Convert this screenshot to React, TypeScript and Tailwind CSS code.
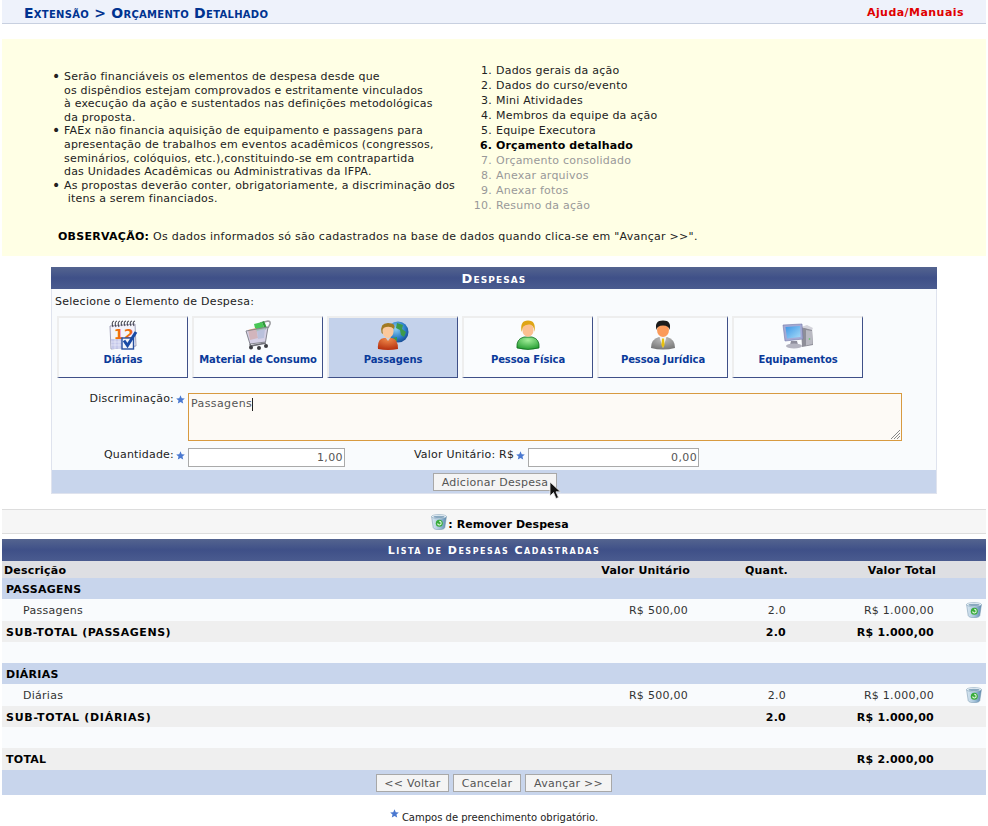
import type { ReactNode } from "react";

const font = "font-['DejaVu_Sans',_Verdana,_sans-serif]";

function Star() {
  return (
    <svg width="9" height="9" viewBox="0 0 10 10" className="shrink-0">
      <path d="M5 0.3 6.4 3.5 9.8 3.8 7.2 6 8 9.5 5 7.7 2 9.5 2.8 6 0.2 3.8 3.6 3.5Z" fill="#4a78d0" />
    </svg>
  );
}

function Trash() {
  return (
    <svg width="16" height="16" viewBox="0 0 16 16">
      <defs>
        <linearGradient id="bin" x1="0" x2="1" y1="0" y2="0">
          <stop offset="0" stopColor="#dce9f3" />
          <stop offset="0.5" stopColor="#a9c6dc" />
          <stop offset="1" stopColor="#5e8cb2" />
        </linearGradient>
      </defs>
      <path d="M0.6 2.6 2.2 13.6Q3 15.7 8 15.7T13.8 13.6L15.4 2.6Z" fill="url(#bin)" stroke="#6c8fa9" strokeWidth="0.5" />
      <ellipse cx="8" cy="2.6" rx="7.5" ry="2.1" fill="#eef5fa" stroke="#7c9cb4" strokeWidth="0.5" />
      <ellipse cx="8" cy="2.9" rx="5.6" ry="1.1" fill="#8aa9c0" />
      <circle cx="8.3" cy="9.2" r="3.5" fill="#38ac3a" />
      <path d="M6.6 9.4A1.8 1.8 0 1 0 8.3 7.4" fill="none" stroke="#e4f6df" strokeWidth="1.1" />
    </svg>
  );
}

function CalendarIcon() {
  return (
    <svg width="30" height="30" viewBox="0 0 30 30">
      <path d="M2 6 27 4 28 26 3 29Z" fill="#f4f3fb" stroke="#8c8caa" strokeWidth="0.8" />
      <path d="M3 19H15V28.5L3.6 29Z" fill="#c5c8ea" />
      <path d="M3 22H15M3 25H15M7 19V29M11 19V29" stroke="#f2f2fb" strokeWidth="0.6" />
      <path d="M5 7Q3 2 6 1M8 7Q6 2 9 1M11 7Q9 2 12 1M14 6Q12 2 15 1M17 6Q15 2 18 1M20 6Q18 2 21 1M23 6Q21 2 24 1M26 6Q24 2 27 1" fill="none" stroke="#4a4a55" strokeWidth="1.1" />
      <text x="6" y="19" fontSize="14" fontWeight="700" fill="#ef6d12" fontFamily="DejaVu Sans">12</text>
      <rect x="14" y="18" width="11.5" height="11" fill="#f4f6fc" stroke="#274f9f" strokeWidth="1.4" />
      <path d="M16 20.5 19.5 25.5 28 12" fill="none" stroke="#1a4aa5" strokeWidth="3" />
    </svg>
  );
}

function CartIcon() {
  return (
    <svg width="26" height="30" viewBox="0 0 26 30">
      <path d="M15 3 23 1Q25.5 1 25 4L23 8" fill="none" stroke="#9a9a9e" strokeWidth="1.6" />
      <path d="M9 4 17 2 20 10 11 12Z" fill="#48c656" />
      <path d="M17 2 20 10 22 8 19 1Z" fill="#2f9a3c" />
      <path d="M3 10 11 8 13 18 5 20Z" fill="#ef9a68" />
      <path d="M12 11 20 9 19 18 13 19Z" fill="#9cc4dc" />
      <path d="M1 11 23 7 20.5 22 5 24Z" fill="#c6bfdc" fillOpacity="0.72" stroke="#85858f" strokeWidth="1" />
      <path d="M5 24 5.5 26 21 23" fill="none" stroke="#707078" strokeWidth="1.6" />
      <circle cx="6" cy="27.5" r="2" fill="#3d3d42" />
      <circle cx="14" cy="28" r="2" fill="#3d3d42" />
      <circle cx="21" cy="26" r="2" fill="#3d3d42" />
    </svg>
  );
}

function TravelIcon() {
  return (
    <svg width="32" height="30" viewBox="0 0 32 30">
      <defs>
        <radialGradient id="globe" cx="0.4" cy="0.35" r="0.75">
          <stop offset="0" stopColor="#8fd0f4" />
          <stop offset="0.6" stopColor="#2b7cc6" />
          <stop offset="1" stopColor="#123f86" />
        </radialGradient>
        <radialGradient id="redShirt" cx="0.5" cy="0.1" r="0.9">
          <stop offset="0" stopColor="#f08a4a" />
          <stop offset="1" stopColor="#b6300f" />
        </radialGradient>
      </defs>
      <circle cx="21" cy="12" r="10.5" fill="url(#globe)" />
      <path d="M20 3 26 5 25 9 29 12 27 17 24 15 23 10 19 8Z" fill="#3d9a4a" />
      <path d="M16 18 20 17 20 21 17 21Z" fill="#3d9a4a" />
      <path d="M1 29Q0 19 7 18H15Q21 19 21 29Q11 31 1 29Z" fill="url(#redShirt)" />
      <path d="M8 17H14L11 21Z" fill="#cfd3dc" />
      <ellipse cx="11" cy="11" rx="5.6" ry="7" fill="#fbc89c" />
      <path d="M4.6 13Q2.5 3 11 3T17 9Q14 6 9 7T6 14Z" fill="#a27a22" />
    </svg>
  );
}

function PersonIcon() {
  return (
    <svg width="24" height="30" viewBox="0 0 24 30">
      <defs>
        <radialGradient id="greenShirt" cx="0.5" cy="0.25" r="0.8">
          <stop offset="0" stopColor="#a3ee9a" />
          <stop offset="1" stopColor="#1f9a2c" />
        </radialGradient>
      </defs>
      <path d="M1 28Q0 19 8 17H16Q24 19 23 28Q12 31 1 28Z" fill="url(#greenShirt)" stroke="#126d20" strokeWidth="0.8" />
      <ellipse cx="12" cy="10" rx="5.6" ry="6.8" fill="#fcc091" />
      <path d="M5.6 12Q3.5 0.5 12 0.5T18.4 12Q18 5 14 4.5Q9 4 7 7Z" fill="#dfa516" />
    </svg>
  );
}

function SuitIcon() {
  return (
    <svg width="24" height="30" viewBox="0 0 24 30">
      <defs>
        <radialGradient id="suit" cx="0.5" cy="0.2" r="0.9">
          <stop offset="0" stopColor="#bdbdbd" />
          <stop offset="1" stopColor="#6f6f6f" />
        </radialGradient>
      </defs>
      <path d="M0 28Q0 19 8 17H16Q24 19 24 28Q12 31 0 28Z" fill="url(#suit)" />
      <path d="M8.5 17H15.5L12 28Z" fill="#f4f4f4" />
      <path d="M11 18.5H13L13.6 25 12 28 10.4 25Z" fill="#e8c210" />
      <ellipse cx="12" cy="10" rx="6" ry="7" fill="#fb9a5a" />
      <path d="M5.5 10Q3 0.5 12 0.5T18.5 10Q18 5.5 12 5.5T5.5 10Z" fill="#1b1b1b" />
    </svg>
  );
}

function ComputerIcon() {
  return (
    <svg width="32" height="30" viewBox="0 0 32 30">
      <defs>
        <linearGradient id="screen" x1="0" x2="1" y1="0" y2="1">
          <stop offset="0" stopColor="#3b96e6" />
          <stop offset="1" stopColor="#a8dcf8" />
        </linearGradient>
      </defs>
      <path d="M19 7 30 9 31 25 20 27Z" fill="#8e8e98" />
      <path d="M19 7 25 5 31 8 30 10Z" fill="#d2d2da" />
      <path d="M24 10 30 11 30.5 24 24 25.5Z" fill="#b9b9c2" />
      <circle cx="27.5" cy="19" r="0.8" fill="#55c060" />
      <path d="M1 5 20 4 21 19 3 21Z" fill="#a4a9d4" stroke="#7378a6" strokeWidth="0.6" />
      <path d="M3.5 7 18 6 18.6 17 5 18.6Z" fill="url(#screen)" />
      <path d="M9 21H15L16 25H8Z" fill="#8e8e9c" />
      <ellipse cx="12" cy="26" rx="8" ry="2.4" fill="#b4b4c0" />
    </svg>
  );
}

const elementos: { label: string; icon: ReactNode; active?: boolean }[] = [
  { label: "Diárias", icon: <CalendarIcon /> },
  { label: "Material de Consumo", icon: <CartIcon /> },
  { label: "Passagens", icon: <TravelIcon />, active: true },
  { label: "Pessoa Física", icon: <PersonIcon /> },
  { label: "Pessoa Jurídica", icon: <SuitIcon /> },
  { label: "Equipamentos", icon: <ComputerIcon /> },
];

const passos = [
  "Dados gerais da ação",
  "Dados do curso/evento",
  "Mini Atividades",
  "Membros da equipe da ação",
  "Equipe Executora",
  "Orçamento detalhado",
  "Orçamento consolidado",
  "Anexar arquivos",
  "Anexar fotos",
  "Resumo da ação",
];

function Bullet({ children }: { children: ReactNode }) {
  return (
    <li className="flex">
      <span className="w-[12px] text-[14px] leading-[13px] shrink-0">•</span>
      <span>{children}</span>
    </li>
  );
}

function Row({ bg, label, unit, qty, total, bold, icon, labelClass = "", tall }: {
  bg: string;
  label?: string;
  unit?: string;
  qty?: string;
  total?: string;
  bold?: boolean;
  icon?: boolean;
  labelClass?: string;
  tall?: boolean;
}) {
  const pad = bold && !tall ? "pt-[4px]" : "pt-[2px]";
  return (
    <div className={`flex items-center ${tall ? "h-[22px]" : "h-[21px]"} ${bg} ${bold ? "font-bold text-black" : "text-[#333]"} tracking-[0.27px]`}>
      <span className={`flex-1 ${pad} ${bold ? "pl-1" : "pl-[21px]"} ${labelClass}`}>{label}</span>
      <span className={`w-[150px] ${pad} text-right`}>{unit}</span>
      <span className={`w-[98px] ${pad} text-right`}>{qty}</span>
      <span className={`w-[148px] ${pad} text-right`}>{total}</span>
      <span className="w-[52px] flex justify-end pr-[4px]">{icon && <Trash />}</span>
    </div>
  );
}

function Btn({ children, className = "" }: { children: ReactNode; className?: string }) {
  return (
    <button className={`h-[18px] pt-[1px] border border-[#a8a8a8] bg-[#f4f4f4] text-[#555] text-[11px] tracking-[0.26px] leading-none ${className}`}>
      {children}
    </button>
  );
}

export default function App() {
  return (
    <div className={`${font} w-[988px] h-[826px] bg-white px-[2px] text-[11px] tracking-[0.2px] text-[#222] overflow-hidden`}>
      <div className="flex items-center justify-between h-[24px] pt-[3px] bg-[#eef2fb] border-b border-[#c8d0e0] pl-[22px] pr-[22px]">
        <h2 className="text-[#003390] font-bold text-[14px] [font-variant:small-caps] tracking-[0.28px]">
          Extensão &gt; Orçamento Detalhado
        </h2>
        <span className="text-[#e00000] font-bold text-[11px] tracking-[0.45px]">Ajuda/Manuais</span>
      </div>

      <div className="mt-[15px] h-[217px] bg-[#ffffe5] pl-[50px] pr-4 pt-[24px]">
        <div className="flex h-[148px] leading-[13.6px]">
          <ul className="w-[415px] pt-[7px]">
            <Bullet>
              Serão financiáveis os elementos de despesa desde que
              <br />
              os dispêndios estejam comprovados e estritamente vinculados
              <br />
              à execução da ação e sustentados nas definições metodológicas
              <br />
              da proposta.
            </Bullet>
            <Bullet>
              FAEx não financia aquisição de equipamento e passagens para
              <br />
              apresentação de trabalhos em eventos acadêmicos (congressos,
              <br />
              seminários, colóquios, etc.),constituindo-se em contrapartida
              <br />
              das Unidades Acadêmicas ou Administrativas da IFPA.
            </Bullet>
            <Bullet>
              As propostas deverão conter, obrigatoriamente, a discriminação dos
              <br />
              &nbsp;itens a serem financiados.
            </Bullet>
          </ul>
          <ol className="ml-[5px] leading-[15px] tracking-[0.22px]">
            {passos.map((p, i) => (
              <li key={p} className={`flex ${i === 5 ? "font-bold text-black tracking-[0.12px]" : i > 5 ? "text-[#999]" : ""}`}>
                <span className="w-[20px] text-right mr-[4px]">{i + 1}.</span>
                {p}
              </li>
            ))}
          </ol>
        </div>
        <p className="mt-[18px] ml-[6px] tracking-[0.27px]">
          <b className="text-black">OBSERVAÇÃO:</b> Os dados informados só são cadastrados na base de dados quando clica-se em "Avançar &gt;&gt;".
        </p>
      </div>

      <div className="mt-[11px] ml-[49px] w-[886px] bg-[#f9fbfd] border-x border-b border-[#dfe3ee]">
        <div className="h-[22px] pt-[1px] -mx-px flex items-center justify-center bg-gradient-to-b from-[#54648f] via-[#3f5088] to-[#4a5b8f] text-white font-bold text-[13px] [font-variant:small-caps] tracking-[1.1px]">
          Despesas
        </div>
        <p className="pl-[3px] pt-[6px] leading-[14px] h-[27px] tracking-[0.26px]">Selecione o Elemento de Despesa:</p>
        <div className="flex gap-[4px] pl-[5px]">
          {elementos.map((e) => (
            <div
              key={e.label}
              className={`w-[131px] h-[62px] flex flex-col items-center pt-[2px] border-t-2 border-l-2 border-r border-b border-t-[#eeeeee] border-l-[#eeeeee] border-r-[#3f5088] border-b-[#3f5088] ${e.active ? "bg-[#c4d2eb]" : "bg-[#fafcfe]"}`}
            >
              <div className="h-[33px] flex items-start">{e.icon}</div>
              <span className="text-[#0a3a9a] font-bold text-[10px] tracking-[-0.1px] whitespace-nowrap leading-[14px]">{e.label}</span>
            </div>
          ))}
        </div>
        <div className="flex mt-[15px] h-[48px]">
          <label className="w-[133px] flex justify-end gap-[2px] leading-[12px]">
            Discriminação:
            <span className="pt-[2px]"><Star /></span>
          </label>
          <div className="ml-[3px] relative w-[714px] h-[48px] border border-[#d89a40] bg-[#fdfaf6] pl-[2px] pt-[3px] leading-[14px] text-[#555] tracking-[0.4px]">
            Passagens<span className="inline-block w-px h-[13px] bg-[#222] align-middle" />
            <svg width="11" height="11" viewBox="0 0 11 11" className="absolute right-0 bottom-0">
              <path d="M10 1 1 10M10 4 4 10M10 7 7 10" stroke="#888" strokeWidth="1" />
            </svg>
          </div>
        </div>
        <div className="flex items-center mt-[6px] h-[20px]">
          <label className="w-[133px] flex justify-end items-center gap-[2px] -mt-[3px]">
            Quantidade:
            <Star />
          </label>
          <div className="ml-[3px] w-[157px] h-[19px] border border-[#aaa] bg-white text-right pr-[1px] leading-[17px] text-[#555] tracking-[0.4px]">1,00</div>
          <label className="ml-[69px] flex items-center gap-[2px] -mt-[3px]">
            Valor Unitário: R$
            <Star />
          </label>
          <div className="ml-[3px] w-[171px] h-[19px] border border-[#aaa] bg-white text-right pr-[1px] leading-[17px] text-[#555] tracking-[0.4px]">0,00</div>
        </div>
        <div className="relative mt-[3px] h-[23px] bg-[#c8d5ec] flex justify-center items-center">
          <Btn className="w-[124px] ml-[2px] mt-[1px]">Adicionar Despesa</Btn>
          <svg width="12" height="19" viewBox="0 0 12 19" className="absolute left-[497px] top-[11px]">
            <path d="M1 1V15L4.5 11.5 7 17.5 9.5 16.5 7 10.8H11.5Z" fill="#111" stroke="#eee" strokeWidth="0.8" />
          </svg>
        </div>
      </div>

      <div className="mt-[15px] h-[25px] bg-[#f6f6f6] border-y border-[#dddddd] flex items-center justify-center gap-[1px] pl-[12px] font-bold text-black tracking-[0.05px]">
        <Trash />
        <span className="mt-[7px]">: Remover Despesa</span>
      </div>

      <div className="mt-[5px] h-[22px] pt-[2px] flex items-center justify-center bg-gradient-to-b from-[#54648f] via-[#3f5088] to-[#4a5b8f] text-white font-bold text-[11px] [font-variant:small-caps] tracking-[1.5px]">
        Lista de Despesas Cadastradas
      </div>
      <div className="flex items-center h-[17px] pt-[2px] bg-[#dedfe3] font-bold text-black">
        <span className="flex-1 pl-[2px] pt-[1px]">Descrição</span>
        <span className="w-[150px] pt-[1px] text-right">Valor Unitário</span>
        <span className="w-[98px] pt-[1px] text-right">Quant.</span>
        <span className="w-[148px] pt-[1px] text-right">Valor Total</span>
        <span className="w-[50px]" />
      </div>
      <Row bg="bg-[#c8d5ec]" label="PASSAGENS" bold />
      <Row bg="bg-[#f9fbfd]" label="Passagens" unit="R$ 500,00" qty="2.0" total="R$ 1.000,00" icon tall />
      <Row bg="bg-[#efefef]" label="SUB-TOTAL (PASSAGENS)" qty="2.0" total="R$ 1.000,00" bold labelClass="tracking-[0.52px]" />
      <Row bg="bg-[#f9fbfd]" />
      <Row bg="bg-[#c8d5ec]" label="DIÁRIAS" bold />
      <Row bg="bg-[#f9fbfd]" label="Diárias" unit="R$ 500,00" qty="2.0" total="R$ 1.000,00" icon tall />
      <Row bg="bg-[#efefef]" label="SUB-TOTAL (DIÁRIAS)" qty="2.0" total="R$ 1.000,00" bold labelClass="tracking-[0.72px]" />
      <Row bg="bg-[#f9fbfd]" />
      <Row bg="bg-[#efefef]" label="TOTAL" total="R$ 2.000,00" bold tall />
      <div className="h-[25px] bg-[#c8d5ec] flex items-center justify-center gap-[4px]">
        <Btn className="w-[73px]">&lt;&lt; Voltar</Btn>
        <Btn className="w-[68px]">Cancelar</Btn>
        <Btn className="w-[87px]">Avançar &gt;&gt;</Btn>
      </div>
      <div className="mt-[15px] flex justify-center items-start gap-[3px] text-[10px] text-[#222] tracking-normal leading-[12px]">
        <span className="-mt-[1px]"><Star /></span>
        <span className="mt-[2px]">Campos de preenchimento obrigatório.</span>
      </div>
    </div>
  );
}
